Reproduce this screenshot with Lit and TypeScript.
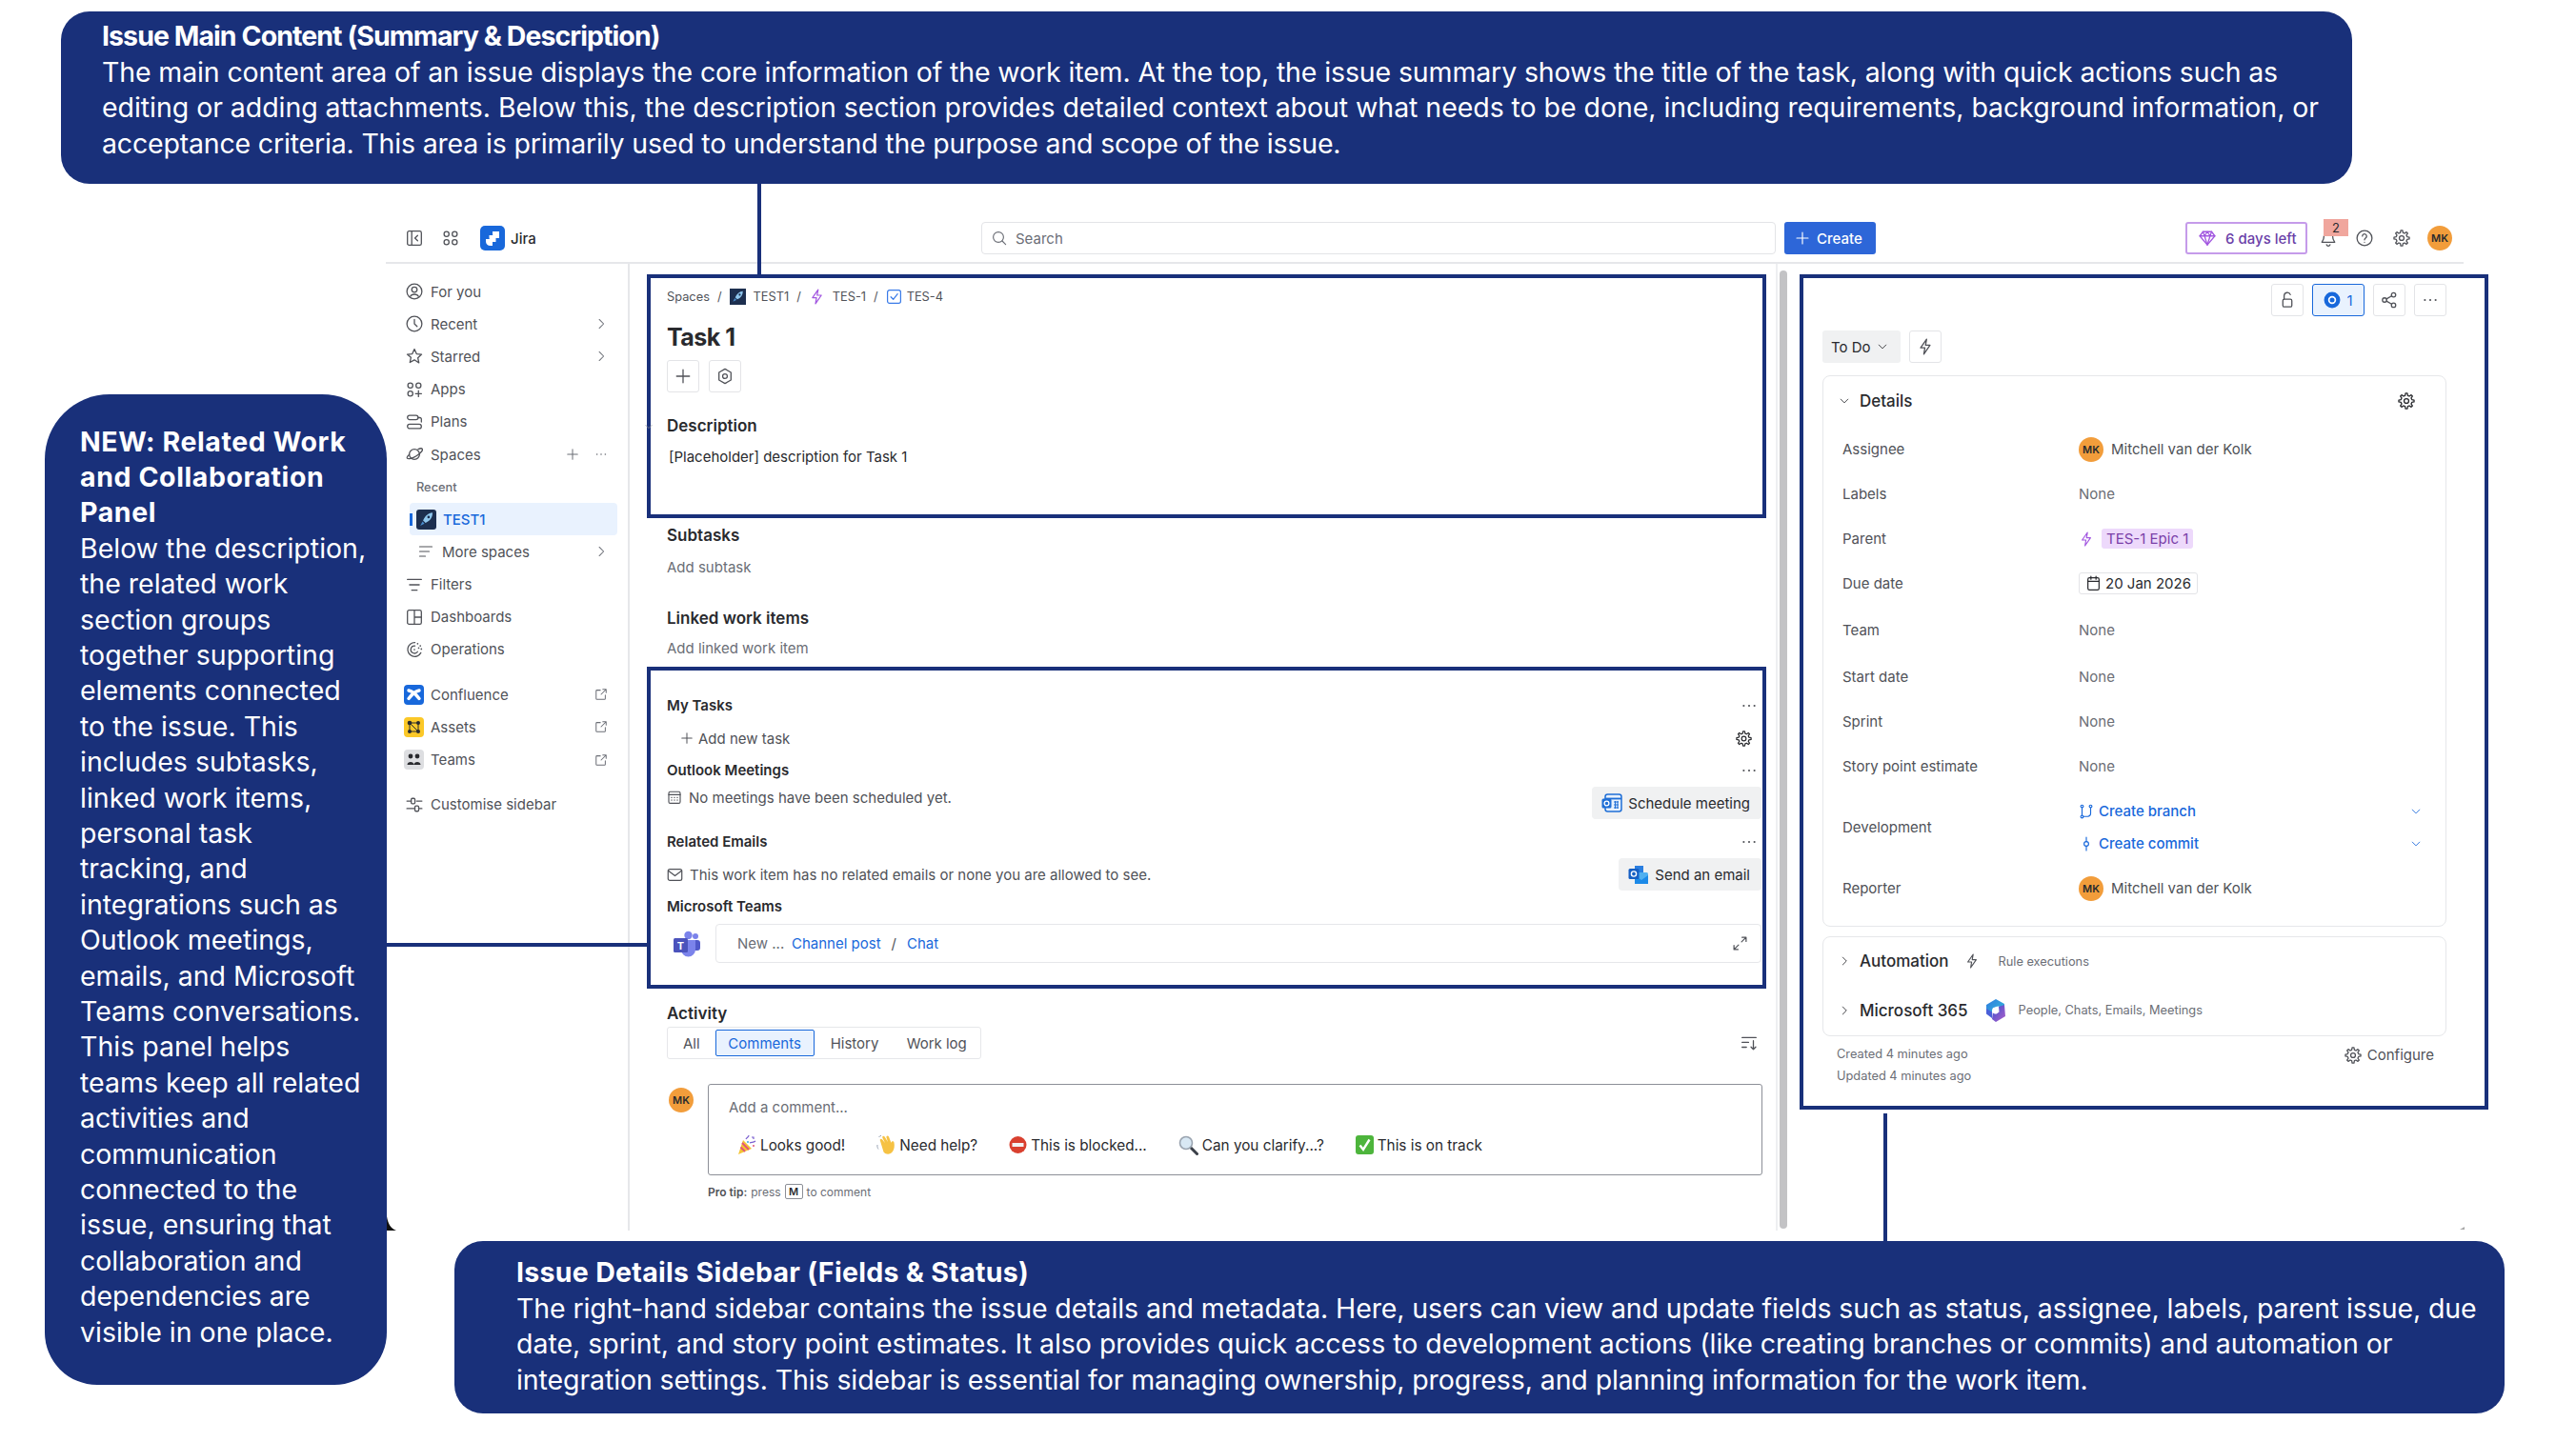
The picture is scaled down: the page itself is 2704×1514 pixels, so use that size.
import { LitElement, html, css, svg } from "lit";
import { customElement } from "lit/decorators.js";

const ic = (body: unknown, s = 18, cls = "") => html`<svg class="ic ${cls}" width=${s} height=${s} viewBox="0 0 16 16" fill="none" stroke="currentColor" stroke-width="1.15" stroke-linecap="round" stroke-linejoin="round">${body}</svg>`;

const gearD = (() => {
  const pts: string[] = [];
  const n = 8;
  for (let i = 0; i < n; i++) {
    const a = (i / n) * Math.PI * 2 - Math.PI / 2;
    const w = Math.PI / n;
    [[-0.62, 5.2], [-0.3, 7.2], [0.3, 7.2], [0.62, 5.2]].forEach(([o, r]) => {
      const t = a + o * w;
      pts.push(`${(8 + r * Math.cos(t)).toFixed(2)} ${(8 + r * Math.sin(t)).toFixed(2)}`);
    });
  }
  return `M${pts.join("L")}z`;
})();

const P = {
  panel: svg`<rect x="1.5" y="1.5" width="13" height="13" rx="1.5"/><path d="M5.5 1.5v13M11 5.5 8.5 8l2.5 2.5"/>`,
  grid: svg`<circle cx="4.2" cy="4.2" r="2.3"/><circle cx="11.8" cy="4.2" r="2.3"/><circle cx="4.2" cy="11.8" r="2.3"/><circle cx="11.8" cy="11.8" r="2.3"/>`,
  you: svg`<circle cx="8" cy="8" r="7"/><circle cx="8" cy="6.3" r="2.5"/><path d="M4.2 12.6c1.2-2.6 6.4-2.6 7.6 0"/>`,
  clock: svg`<circle cx="8" cy="8" r="7"/><path d="M8 3.8V8l2.5 2.5"/>`,
  star: svg`<path d="M8 1.4l2 4.4 4.7.5-3.5 3.2 1 4.7L8 11.4l-4.2 2.4 1-4.7L1.3 6.3 6 5.8z"/>`,
  apps: svg`<circle cx="4.2" cy="4.2" r="2.3"/><circle cx="11.8" cy="4.2" r="2.3"/><circle cx="4.2" cy="11.8" r="2.3"/><path d="M11.8 9v5.6M9 11.8h5.6"/>`,
  plans: svg`<rect x="1.5" y="1.8" width="10" height="4" rx="2"/><rect x="1.5" y="10.2" width="13" height="4" rx="2"/><path d="M11.5 4h1.5a1.6 1.6 0 0 1 1.5 2v2"/>`,
  spaces: svg`<circle cx="8" cy="8" r="4.8"/><path d="M11.5 3.2c2-.9 3.5-.9 3.9-.1.6 1.3-2 4.2-5.6 6.4s-7.6 3.3-8.5 2.1c-.5-.7.3-2 1.9-3.4"/>`,
  lines: svg`<path d="M1.5 3h13M3.5 8h9M5.5 13h5"/>`,
  lines2: svg`<path d="M1.5 3h13M1.5 8h10M1.5 13h6"/>`,
  dash: svg`<rect x="1.5" y="1.5" width="13" height="13" rx="1.5"/><path d="M8 1.5v13M8 8h6.5"/>`,
  ops: svg`<path d="M8.5 1.5a6.5 6.5 0 1 0 5.5 9.5"/><path d="M8.5 4.5a3.5 3.5 0 1 0 2.5 5.5"/><path d="M11 2.5h.01M13.5 4.5h.01M14.5 7.5h.01M12 6.5h.01M8 8h.01" stroke-width="1.5"/>`,
  ext: svg`<path d="M7 3H3a1 1 0 0 0-1 1v9a1 1 0 0 0 1 1h9a1 1 0 0 0 1-1V9"/><path d="M8 8l6-6M10 2h4v4"/>`,
  sliders: svg`<path d="M1 4.5h4M10 4.5h5M1 11.5h7M12.5 11.5H15"/><rect x="5" y="2" width="3.5" height="5" rx="1"/><rect x="8.5" y="9" width="3.5" height="5" rx="1"/>`,
  right: svg`<path d="M5.8 2.8 11 8l-5.2 5.2"/>`,
  down: svg`<path d="M3 5.5 8 10.5l5-5"/>`,
  plus: svg`<path d="M8 2v12M2 8h12"/>`,
  dots: svg`<path d="M3 8h.01M8 8h.01M13 8h.01" stroke-width="1.9"/>`,
  search: svg`<circle cx="7" cy="7" r="5.4"/><path d="M11 11l3.6 3.6"/>`,
  help: svg`<circle cx="8" cy="8" r="7"/><path d="M6 6.2a2 2 0 1 1 3.2 1.6C8.4 8.4 8 8.8 8 9.6M8 11.8h.01"/>`,
  gear: svg`<path d=${gearD}/><circle cx="8" cy="8" r="2.200"/>`,
  bell: svg`<path d="M8 1.8a4 4 0 0 0-4 4c0 3.6-1.3 5-2 6h12c-.7-1-2-2.4-2-6a4 4 0 0 0-4-4z"/><path d="M6.4 14.2a1.7 1.7 0 0 0 3.2 0"/>`,
  gem: svg`<path d="M4 2h8l3 4-7 8.4L1 6z"/><path d="M1 6h14M5.4 6 8 14.4 10.6 6M4 2l1.4 4L8 2l2.6 4L12 2"/>`,
  nut: svg`<path d="M8 1.2l5.6 3.3v7L8 14.8l-5.6-3.3v-7z"/><circle cx="8" cy="8" r="2.2"/>`,
  bolt: svg`<path d="M9.2 1 3.6 9h4l-1 6 5.8-8.4H8.2z"/>`,
  check: svg`<rect x="1.5" y="1.5" width="13" height="13" rx="2"/><path d="M4.8 8.2 7.2 10.6 11.4 5.2"/>`,
  cal: svg`<rect x="2" y="2.2" width="12" height="12.2" rx="1.5"/><path d="M2 5.4h12M4.7 8.2h.6M7.7 8.2h.6M10.7 8.2h.6M4.7 11h.6M7.7 11h.6M10.7 11h.6"/>`,
  cal2: svg`<rect x="2.5" y="2.5" width="11" height="12" rx="1.5"/><path d="M2.5 6h11M5.5 1v3M10.5 1v3"/>`,
  mail: svg`<rect x="1.2" y="2.5" width="13.6" height="11" rx="1.8"/><path d="M1.5 4 8 9l6.5-5"/>`,
  expand: svg`<path d="M9.5 6.5 14 2M10 2h4v4M6.5 9.5 2 14M2 10v4h4"/>`,
  sort: svg`<path d="M1.5 3h13M1.5 7.5h6M1.5 12h4M12 6v8M9.8 11.8l2.2 2.2 2.2-2.2"/>`,
  lock: svg`<path d="M5 7V4a3 3 0 0 1 5.8-1"/><rect x="3.8" y="7.2" width="8.4" height="7.2" rx="1.4"/>`,
  share: svg`<circle cx="12" cy="3.2" r="2"/><circle cx="3.6" cy="8" r="2"/><circle cx="12" cy="12.8" r="2"/><path d="M10.2 4.2 5.4 7M5.4 9l4.8 2.8"/>`,
  branch: svg`<circle cx="3.5" cy="2.6" r="1.4"/><circle cx="12.5" cy="2.6" r="1.4"/><circle cx="3.5" cy="13.4" r="1.4"/><path d="M3.5 4v8M12.5 4v6a3 3 0 0 1-3 3.2H5"/>`,
  commit: svg`<circle cx="8" cy="8" r="2.4"/><path d="M8 1v4.6M8 10.4V15"/>`,
};

const rocket = (s: number, cls: string) => html`<svg class=${cls} width=${s} height=${s} viewBox="0 0 16 16"><rect width="16" height="16" fill="#1d2f4f"/><path d="M13 2.5c-3.5.3-6 2.6-7.6 6.2l2 2C11 9 13 6.300 13 2.500z" fill="#8fc7ee"/><path d="M5 9.500 3.200 13l3.300-1.800z" fill="#4a8fd0"/><circle cx="9.800" cy="6" r="1" fill="#1d2f4f"/></svg>`;

const logoJira = html`<svg width="26" height="26" viewBox="0 0 26 26"><rect width="26" height="26" rx="5" fill="#1868db"/><path d="M13 6h7v7h-2.500a4.500 4.500 0 0 1-4.500-4.500zM9.500 10h7v7H14a4.500 4.500 0 0 1-4.500-4.500zM6 14h7v7h-2.500A4.500 4.500 0 0 1 6 16.500z" fill="#fff"/></svg>`;
const logoConf = html`<svg width="21" height="21" viewBox="0 0 21 21"><rect width="21" height="21" rx="4" fill="#1868db"/><path d="M5 6c3 .5 8 4.500 11 8.500M16 6c-3 .5-8 4.500-11 8.500" stroke="#fff" stroke-width="3.400" fill="none" stroke-linecap="round"/></svg>`;
const logoAssets = html`<svg width="21" height="21" viewBox="0 0 21 21"><rect width="21" height="21" rx="4" fill="#fbc828"/><g fill="#292a2e"><circle cx="6" cy="6" r="2.300"/><circle cx="15" cy="6" r="2"/><circle cx="6" cy="15" r="2"/><circle cx="15" cy="15" r="2"/></g><path d="M6 6h9v9H6zM6 6l9 9" stroke="#292a2e" fill="none"/></svg>`;
const logoTeams = html`<svg width="21" height="21" viewBox="0 0 21 21"><rect width="21" height="21" rx="4" fill="#dddee1"/><g fill="#292a2e"><circle cx="7" cy="7" r="2.400"/><circle cx="14" cy="7" r="2.400"/><path d="M3.500 16c0-4 7-4 7 0zM10.500 16c0-4 7-4 7 0z"/></g></svg>`;
const msTeams = html`<svg width="30" height="28" viewBox="0 0 30 28"><circle cx="24" cy="6" r="3" fill="#7b83eb"/><circle cx="16.500" cy="5" r="4.200" fill="#7b83eb"/><rect x="19" y="10" width="10" height="11" rx="3" fill="#5059c9"/><path d="M9 10h15v10a7.500 7.500 0 0 1-15 0z" fill="#7b83eb"/><rect x="1" y="8" width="15" height="15" rx="1.500" fill="#4b53bc"/><text x="8.500" y="20" text-anchor="middle" font-family="Inter" font-size="11" font-weight="700" fill="#fff">T</text></svg>`;
const outCal = html`<svg width="22" height="22" viewBox="0 0 22 22"><rect x="4" y="2" width="17" height="18" rx="2.500" fill="#e8f1fc" stroke="#1f6fd6" stroke-width="1.500"/><path d="M4 6.500h17" stroke="#1f6fd6" stroke-width="1.800"/><path d="M13 10h5M13 13h5M13 16h5M14.500 9v8M17 9v8" stroke="#1f6fd6"/><rect x="0.500" y="6.500" width="10" height="10" rx="1.500" fill="#1f6fd6"/><circle cx="5.500" cy="11.500" r="2.400" fill="none" stroke="#fff" stroke-width="1.300"/></svg>`;
const outMail = html`<svg width="22" height="22" viewBox="0 0 22 22"><rect x="7" y="2" width="9" height="8" fill="#2a7ee0"/><rect x="7" y="9" width="14" height="12" rx="1.500" fill="#50b0f0"/><path d="M7 12l7 5 7-5v9H7z" fill="#1c8ae8"/><rect x="0.500" y="5" width="11" height="11" rx="1.500" fill="#1660c4"/><circle cx="6" cy="10.500" r="2.600" fill="none" stroke="#fff" stroke-width="1.400"/></svg>`;
const m365 = html`<svg width="23" height="26" viewBox="0 0 23 26"><defs><linearGradient id="ma" x1="0" y1="0" x2="1" y2="1"><stop offset="0" stop-color="#2f7ae0"/><stop offset="1" stop-color="#35c0d8"/></linearGradient><linearGradient id="mb" x1="0" y1="0" x2="1" y2="1"><stop offset="0" stop-color="#3a4fd0"/><stop offset="1" stop-color="#b060c8"/></linearGradient></defs><path d="M12 1 21 6v6l-6-3.500-3 .5-4 4v6l-6-4V7z" fill="url(#ma)"/><path d="M21 7l1 12-10 6-4-3 1-8 3 2.500 3.500-2L15 9z" fill="url(#mb)"/><path d="M8 21 2 16.500V11l6 3.500z" fill="#4a5fd8"/><circle cx="11.500" cy="13" r="3.400" fill="#fff"/></svg>`;
const party = html`<svg width="20" height="22" viewBox="0 0 20 22"><path d="M1 21 6 6l9 9z" fill="#f4c534"/><path d="M3.500 13.500 8 18M5 9l7 7" stroke="#e2557a" stroke-width="1.800"/><path d="M9 5c1-2 3-2 3-4M13 9c2-1 4 0 6-2M15 3h2v2" stroke="#7a5fd0" stroke-width="1.200" fill="none"/><circle cx="11" cy="8" r="1" fill="#3fa9e0"/><circle cx="17" cy="12" r="1" fill="#e2557a"/></svg>`;
const wave = html`<svg width="20" height="22" viewBox="0 0 20 22"><path d="M4 7c-1-2 1-3 2.200-1.500L9 9 6.500 4c-1-2 1.200-3 2.300-1.300L12 8l-1.500-4.500c-.6-1.900 1.700-2.700 2.500-1L15.500 9c0-2 2.500-2.500 3-.5.700 3.500.3 7-1.500 9.500-2.500 3.500-7 3.500-9.500.5z" fill="#f6c244"/><path d="M1 11c-.3 1.500 0 3 1 4.500M2.500 3C3.200 2 4 1.500 5 1.300" stroke="#9aa4b5" fill="none"/></svg>`;
const blocked = html`<svg width="19" height="20" viewBox="0 0 19 20"><circle cx="9.500" cy="10" r="9" fill="#d9402f"/><rect x="3.500" y="8" width="12" height="4" fill="#f2f2f2"/></svg>`;
const lens = html`<svg width="21" height="21" viewBox="0 0 21 21"><path d="M12 12l7.500 7.500" stroke="#3a3f48" stroke-width="3" stroke-linecap="round"/><circle cx="8" cy="8" r="6.500" fill="#d8e8f4" stroke="#9aa4b0" stroke-width="1.600"/></svg>`;
const tick = html`<svg width="19" height="20" viewBox="0 0 19 20"><rect width="19" height="20" rx="3" fill="#4db53c"/><path d="M4.500 10.500 8 15 14.500 4.500" stroke="#fff" stroke-width="2.400" fill="none"/></svg>`;

const NAV: [string, unknown, boolean?][] = [
  ["For you", P.you],
  ["Recent", P.clock, true],
  ["Starred", P.star, true],
  ["Apps", P.apps],
  ["Plans", P.plans],
];
const APPS: [string, unknown][] = [["Confluence", logoConf], ["Assets", logoAssets], ["Teams", logoTeams]];

const TOP = [
  "The main content area of an issue displays the core information of the work item. At the top, the issue summary shows the title of the task, along with quick actions such as",
  "editing or adding attachments. Below this, the description section provides detailed context about what needs to be done, including requirements, background information, or",
  "acceptance criteria. This area is primarily used to understand the purpose and scope of the issue.",
];
const LEFT_T = ["NEW: Related Work", "and Collaboration", "Panel"];
const LEFT = ["Below the description,", "the related work", "section groups", "together supporting", "elements connected", "to the issue. This", "includes subtasks,", "linked work items,", "personal task", "tracking, and", "integrations such as", "Outlook meetings,", "emails, and Microsoft", "Teams conversations.", "This panel helps", "teams keep all related", "activities and", "communication", "connected to the", "issue, ensuring that", "collaboration and", "dependencies are", "visible in one place."];
const BOT = [
  "The right-hand sidebar contains the issue details and metadata. Here, users can view and update fields such as status, assignee, labels, parent issue, due",
  "date, sprint, and story point estimates. It also provides quick access to development actions (like creating branches or commits) and automation or",
  "integration settings. This sidebar is essential for managing ownership, progress, and planning information for the work item.",
];

@customElement("app-root")
export class AppRoot extends LitElement {
  static styles = css`
    :host { display: block; position: relative; width: 2704px; height: 1514px; overflow: hidden; background: #fff; font-family: Inter, "Liberation Sans", sans-serif; color: #292a2e; font-size: 14px; }
    * { box-sizing: border-box; }
    .ic { flex: none; display: block; }
    .app { position: absolute; left: 405px; top: 225px; width: 2181px; height: 1067px; display: flex; flex-direction: column; }
    .nav { height: 52px; flex: none; border-bottom: 2px solid #e6e7ea; display: flex; align-items: center; padding: 0 12px 0 21px; color: #505258; }
    .navl { width: 604px; display: flex; align-items: center; gap: 20px; }
    .jira { display: flex; align-items: center; gap: 6px; margin-left: 2px; font-size: 15px; font-weight: 500; color: #292a2e; }
    .search { width: 834px; height: 34px; border: 1.500px solid #e3e4e7; border-radius: 4px; display: flex; align-items: center; gap: 9px; padding-left: 10px; color: #6b6e76; font-size: 15px; }
    .create { margin-left: 9px; width: 96px; height: 34px; background: #2d66d8; color: #fff; border-radius: 3px; display: flex; align-items: center; gap: 7px; padding-left: 11px; font-weight: 500; font-size: 15px; }
    .sp { flex: 1; }
    .trial { width: 128px; height: 34px; border: 2px solid #c59bea; border-radius: 3px; display: flex; align-items: center; gap: 10px; padding-left: 12px; color: #6b3fa8; font-size: 15px; font-weight: 500; white-space: nowrap; }
    .trial .ic { color: #a257e0; }
    .bell { position: relative; margin-left: 13px; color: #505258; }
    .badge { position: absolute; left: 4px; top: -11px; width: 26px; height: 18px; background: #f0a69d; display: flex; align-items: center; justify-content: center; font-size: 13px; color: #292a2e; }
    .help { margin-left: 20px; }
    .cog { margin-left: 21px; }
    .av { width: 26px; height: 26px; border-radius: 50%; background: #f29d3b; color: #292a2e; font-size: 11px; font-weight: 600; display: flex; align-items: center; justify-content: center; flex: none; }
    .cog + .av { margin-left: 18px; }
    .body { flex: 1; display: flex; min-height: 0; }
    .side { width: 256px; flex: none; border-right: 2px solid #e6e7ea; padding-top: 12px; color: #505258; font-size: 15px; }
    .si { height: 34.200px; display: flex; align-items: center; gap: 8px; padding: 0 21px; }
    .si .lbl { flex: 1; white-space: nowrap; }
    .si .tr { color: #6b6e76; }
    .si .logo { margin-left: -2px; margin-right: -1px; flex: none; display: flex; }
    .si.sub { padding-left: 32px; font-size: 12.800px; font-weight: 500; color: #6b6e76; }
    .si.act { margin: 0 11px 0 25px; padding: 0 0 0 7px; height: 34px; background: #e9f2fe; border-radius: 4px; color: #1868db; position: relative; gap: 7px; font-weight: 500; }
    .si.act::before { content: ""; position: absolute; left: 0; top: 11px; width: 2.500px; height: 13px; background: #1868db; }
    .roc { border-radius: 3px; flex: none; }
    .si.more { padding-left: 34px; gap: 9px; }
    .gap1 { margin-top: 13px; }
    .gap2 { margin-top: 13px; }
    .main { width: 1203px; flex: none; padding: 24px 15px 0 39px; }
    .crumb { height: 20px; display: flex; align-items: center; gap: 8px; font-size: 12.800px; color: #505258; white-space: nowrap; }
    .crumb .bolt { color: #a257e0; }
    .crumb .chk { color: #3a7be8; }
    .crumb .last { margin-left: -3px; }
    h1 { margin: 17px 0 0; height: 32px; line-height: 32px; font-size: 25px; font-weight: 700; letter-spacing: -0.500px; }
    .tools { margin-top: 8px; display: flex; gap: 10px; }
    .btn { width: 34px; height: 34px; border: 1.500px solid #e3e4e7; border-radius: 3px; display: flex; align-items: center; justify-content: center; color: #505258; }
    .h16 { height: 24px; line-height: 24px; font-size: 17px; font-weight: 600; }
    .h14 { height: 20px; line-height: 20px; font-size: 15px; font-weight: 600; }
    .t { height: 20px; line-height: 20px; font-size: 15px; color: #505258; white-space: nowrap; }
    .sub { color: #6b6e76; }
    .m23 { margin-top: 23px; } .m11 { margin-top: 11px; } .m60 { margin-top: 60px; } .m12 { margin-top: 12px; } .m31 { margin-top: 31px; } .m10 { margin-top: 10px; } .m40 { margin-top: 40px; } .m14 { margin-top: 14px; } .m7 { margin-top: 7px; } .m8 { margin-top: 8px; } .m41 { margin-top: 41px; } .m2 { margin-top: 2px; } .m26 { margin-top: 26px; } .m13 { margin-top: 13px; } .m15 { margin-top: 15px; }
    .desc { padding-left: 2px; color: #292a2e; }
    .between { display: flex; justify-content: space-between; align-items: center; }
    .between > .ic:last-child { color: #505258; margin-right: 4px; }
    .addt { display: flex; align-items: center; gap: 5px; padding-left: 14px; color: #505258; font-size: 15px; height: 20px; }
    .addt .lbl { flex: 1; }
    .addt .gearb { color: #292a2e; margin-right: 10px; stroke-width: 2.200; }
    .row { display: flex; justify-content: space-between; height: 34px; }
    .rowc { align-items: center; }
    .msg { display: flex; align-items: center; gap: 7px; height: 22px; font-size: 15px; color: #505258; white-space: nowrap; }
    .pill { height: 34px; background: #f0f1f2; border-radius: 4px; display: flex; align-items: center; gap: 6px; padding: 0 12px 0 10px; font-size: 15px; color: #292a2e; white-space: nowrap; }
    .teams { display: flex; align-items: center; gap: 15px; padding-left: 6px; }
    .tbox { flex: 1; height: 41px; border: 1.500px solid #e6e7ea; border-radius: 4px; display: flex; align-items: center; padding: 0 13px 0 22px; color: #6b6e76; font-size: 15px; white-space: nowrap; }
    .tbox a { color: #1868db; }
    .tbox .new { width: 57px; }
    .tbox .slash { margin: 0 11px 0 11px; color: #505258; }
    .tbox .sp2 { flex: 1; }
    .tbox .ic { color: #505258; }
    .tabs { height: 34px; width: 330px; border: 1.500px solid #e6e7ea; border-radius: 3px; display: flex; align-items: center; padding-left: 16px; font-size: 15px; color: #505258; flex: none; }
    .tab-c { margin-left: 16px; width: 104px; height: 28px; background: #e9f2fe; border: 1.500px solid #1868db; border-radius: 2px; color: #1868db; display: flex; align-items: center; justify-content: center; }
    .tabs .h { margin-left: 17px; width: 80px; }
    .cm { display: flex; gap: 15px; padding-left: 2px; }
    .cm .av { margin-top: 4px; }
    .cbox { flex: 1; height: 96px; margin-right: -1px; border: 1.500px solid #8c8f97; border-radius: 3px; padding: 14px 0 0 21px; }
    .ph { height: 20px; line-height: 20px; font-size: 15px; color: #6b6e76; }
    .quick { margin-top: 18px; display: flex; padding-left: 9px; height: 22px; font-size: 15.300px; color: #292a2e; white-space: nowrap; }
    .q { display: flex; align-items: center; gap: 4px; margin-right: 33px; }
    .tip { margin: 9px 0 0 43px; height: 16px; display: flex; align-items: center; gap: 4px; font-size: 12px; color: #6b6e76; white-space: nowrap; }
    .tip b { color: #505258; font-weight: 600; }
    .kbd { width: 19px; height: 16px; border: 1px solid #8c8f97; border-radius: 2px; display: flex; align-items: center; justify-content: center; font-size: 11px; font-weight: 600; color: #292a2e; }
    .track { width: 16px; flex: none; border-left: 2px solid #eeeff1; padding: 7px 4px 2px 2px; }
    .thumb { height: 100%; background: #c3c3c5; border-radius: 4px; }
    .rp { flex: 1; min-width: 0; padding: 21px 18px 0 33px; }
    .acts { display: flex; justify-content: flex-end; gap: 9px; }
    .eye { width: 55px; height: 34px; background: #e9f2fe; border: 1.500px solid #1868db; border-radius: 3px; display: flex; align-items: center; justify-content: center; gap: 6px; color: #1868db; font-size: 15px; }
    .status { display: flex; gap: 9px; }
    .todo { width: 82px; height: 34px; background: #f0f1f2; border-radius: 3px; display: flex; align-items: center; gap: 6px; padding-left: 9px; font-size: 15px; color: #292a2e; white-space: nowrap; }
    .card { border: 1.500px solid #e6e7ea; border-radius: 8px; }
    .card.det { padding-bottom: 15.500px; }
    .dhead { display: flex; align-items: center; height: 30px; margin: 11px 0 12px; padding: 0 32px 0 16px; font-size: 17px; font-weight: 500; gap: 10px; }
    .dhead .lbl { flex: 1; }
    .fld { display: flex; align-items: center; height: 47px; padding-left: 20px; font-size: 15px; color: #505258; white-space: nowrap; }
    .fld.tall { height: 51px; }
    .fld.dev { height: 81px; }
    .fld .k { width: 248px; flex: none; }
    .fld .v { display: flex; align-items: center; gap: 8px; color: #6b6e76; }
    .name { color: #505258; }
    .v .bolt { color: #a257e0; }
    .chip { height: 21px; padding: 0 5px; background: #edd9fb; border-radius: 3px; color: #7a3fa8; display: flex; align-items: center; }
    .date { height: 23px; border: 1.500px solid #e3e4e7; border-radius: 3px; display: flex; align-items: center; gap: 4px; padding: 0 6px; color: #292a2e; }
    .devs { flex: 1; padding-right: 25px; display: flex; flex-direction: column; gap: 14px; color: #1868db; }
    .devr { height: 20px; display: flex; align-items: center; gap: 5px; font-weight: 500; }
    .devr .lbl { flex: 1; }
    .card2 { margin-top: 10px; }
    .sec { height: 51.500px; display: flex; align-items: center; padding-left: 16px; font-size: 17px; font-weight: 500; white-space: nowrap; }
    .sec .lbl { margin: 0 17px 0 10px; }
    .sec small { font-size: 12.800px; font-weight: 400; color: #6b6e76; margin-left: 13px; }
    .sec .bsec { margin-right: 6px; color: #505258; }
    .foot { display: flex; justify-content: space-between; padding: 7px 13px 0 15px; font-size: 12.800px; color: #6b6e76; }
    .foot div div { height: 23px; line-height: 23px; }
    .conf { display: flex; align-items: center; gap: 6px; font-size: 15px; color: #505258; height: 26px; }
    /* annotation overlay */
    .co { position: absolute; background: #19307a; color: #fff; font-family: Inter, sans-serif; font-size: 28.500px; line-height: 37.500px; white-space: nowrap; }
    .co b { font-weight: 700; display: block; }
    .co-top { left: 64px; top: 12px; width: 2405px; height: 181px; border-radius: 30px; padding: 7px 0 0 43px; letter-spacing: -0.130px; }
    .co-top b { letter-spacing: -0.930px; }
    .co-top div:nth-of-type(2) { letter-spacing: -0.050px; }
    .co-top div:nth-of-type(3) { letter-spacing: -0.180px; }
    .co-left { left: 47px; top: 414px; width: 359px; height: 1040px; border-radius: 68px 68px 55px 55px; padding: 30.500px 0 0 37px; line-height: 37.400px; }
    .co-left b { letter-spacing: 0.600px; }
    .co-bot { left: 477px; top: 1303px; width: 2152px; height: 181px; border-radius: 30px; padding: 14px 0 0 65px; letter-spacing: -0.100px; }
    .co-bot b { letter-spacing: 0.300px; }
    .co-bot div:nth-of-type(2) { letter-spacing: -0.020px; }
    .bx { position: absolute; border: 4px solid #19307a; }
    .b1 { left: 679px; top: 288px; width: 1175px; height: 256px; }
    .b2 { left: 679px; top: 700px; width: 1175px; height: 338px; }
    .b3 { left: 1889px; top: 288px; width: 723px; height: 877px; }
    .ln { position: absolute; background: #19307a; }
    .l1 { left: 795px; top: 193px; width: 4px; height: 95px; }
    .l2 { left: 406px; top: 990px; width: 273px; height: 4px; }
    .l3 { left: 1977px; top: 1169px; width: 4px; height: 134px; }
    .chev { position: absolute; left: 676px; top: 443px; color: #8c8f97; }
    .corner { position: absolute; left: 406px; top: 1277px; }
    .corner2 { position: absolute; left: 2582px; top: 1288px; }
  `;

  render() {
    const none = (k: string, cls = "") => html`<div class="fld ${cls}"><div class="k">${k}</div><div class="v">None</div></div>`;
    const who = (k: string) => html`<div class="fld"><div class="k">${k}</div><div class="v"><div class="av">MK</div><span class="name">Mitchell van der Kolk</span></div></div>`;
    return html`
      <div class="app">
        <div class="nav">
          <div class="navl">${ic(P.panel)}${ic(P.grid)}<div class="jira">${logoJira}Jira</div></div>
          <div class="search">${ic(P.search, 16)}Search</div>
          <div class="create">${ic(P.plus, 16)}Create</div>
          <div class="sp"></div>
          <div class="trial">${ic(P.gem, 18)}6 days left</div>
          <div class="bell">${ic(P.bell)}<div class="badge">2</div></div>
          <div class="help">${ic(P.help)}</div>
          <div class="cog">${ic(P.gear)}</div>
          <div class="av">MK</div>
        </div>
        <div class="body">
          <div class="side">
            ${NAV.map(([t, p, c]) => html`<div class="si">${ic(p)}<span class="lbl">${t}</span>${c ? ic(P.right, 14, "tr") : ""}</div>`)}
            <div class="si">${ic(P.spaces)}<span class="lbl">Spaces</span>${ic(P.plus, 14, "tr")}<span></span>${ic(P.dots, 14, "tr")}</div>
            <div class="si sub">Recent</div>
            <div class="si act">${rocket(21, "roc")}<span class="lbl">TEST1</span></div>
            <div class="si more">${ic(P.lines2, 16)}<span class="lbl">More spaces</span>${ic(P.right, 14, "tr")}</div>
            <div class="si">${ic(P.lines)}<span class="lbl">Filters</span></div>
            <div class="si">${ic(P.dash)}<span class="lbl">Dashboards</span></div>
            <div class="si">${ic(P.ops)}<span class="lbl">Operations</span></div>
            <div class="gap1">
              ${APPS.map(([t, l]) => html`<div class="si"><span class="logo">${l}</span><span class="lbl">${t}</span>${ic(P.ext, 14, "tr")}</div>`)}
            </div>
            <div class="si gap2">${ic(P.sliders)}<span class="lbl">Customise sidebar</span></div>
          </div>
          <div class="main">
            <div class="crumb"><span>Spaces</span><span>/</span>${rocket(17, "")}<span>TEST1</span><span>/</span>${ic(P.bolt, 17, "bolt")}<span>TES-1</span><span>/</span>${ic(P.check, 17, "chk")}<span class="last">TES-4</span></div>
            <h1>Task 1</h1>
            <div class="tools"><div class="btn">${ic(P.plus)}</div><div class="btn">${ic(P.nut)}</div></div>
            <div class="h16 m23">Description</div>
            <div class="t desc m11">[Placeholder] description for Task 1</div>
            <div class="h16 m60">Subtasks</div>
            <div class="t sub m12">Add subtask</div>
            <div class="h16 m31">Linked work items</div>
            <div class="t sub m10">Add linked work item</div>
            <div class="h14 m40 between"><span>My Tasks</span>${ic(P.dots, 18)}</div>
            <div class="addt m14">${ic(P.plus, 14)}<span class="lbl">Add new task</span><span class="gearb">${ic(P.gear, 17)}</span></div>
            <div class="h14 m14 between"><span>Outlook Meetings</span>${ic(P.dots, 18)}</div>
            <div class="row m7"><div class="msg">${ic(P.cal, 16)}No meetings have been scheduled yet.</div><div class="pill">${outCal}Schedule meeting</div></div>
            <div class="h14 m14 between"><span>Related Emails</span>${ic(P.dots, 18)}</div>
            <div class="row rowc m7"><div class="msg">${ic(P.mail, 17)}This work item has no related emails or none you are allowed to see.</div><div class="pill">${outMail}Send an email</div></div>
            <div class="h14 m7">Microsoft Teams</div>
            <div class="teams m8">${msTeams}<div class="tbox"><span class="new">New ...</span><a>Channel post</a><span class="slash">/</span><a>Chat</a><span class="sp2"></span>${ic(P.expand, 17)}</div></div>
            <div class="h16 m41">Activity</div>
            <div class="between m2"><div class="tabs"><span>All</span><div class="tab-c">Comments</div><span class="h">History</span><span>Work log</span></div>${ic(P.sort, 18)}</div>
            <div class="cm m26"><div class="av">MK</div><div class="cbox"><div class="ph">Add a comment...</div><div class="quick">
              <div class="q">${party}Looks good!</div><div class="q">${wave}Need help?</div><div class="q">${blocked}This is blocked...</div><div class="q">${lens}Can you clarify...?</div><div class="q">${tick}This is on track</div>
            </div></div></div>
            <div class="tip"><b>Pro tip:</b> press <span class="kbd">M</span> to comment</div>
          </div>
          <div class="track"><div class="thumb"></div></div>
          <div class="rp">
            <div class="acts"><div class="btn">${ic(P.lock)}</div><div class="eye"><svg width="18" height="18" viewBox="0 0 16 16"><circle cx="8" cy="8" r="7.500" fill="#1868db"/><circle cx="8" cy="8" r="3" fill="none" stroke="#fff" stroke-width="1.500"/></svg>1</div><div class="btn">${ic(P.share)}</div><div class="btn">${ic(P.dots)}</div></div>
            <div class="status m15"><div class="todo">To Do${ic(P.down, 12)}</div><div class="btn">${ic(P.bolt)}</div></div>
            <div class="card det m13">
              <div class="dhead">${ic(P.down, 12)}<span class="lbl">Details</span>${ic(P.gear)}</div>
              ${who("Assignee")}
              ${none("Labels")}
              <div class="fld"><div class="k">Parent</div><div class="v">${ic(P.bolt, 16, "bolt")}<div class="chip">TES-1 Epic 1</div></div></div>
              <div class="fld"><div class="k">Due date</div><div class="v"><div class="date">${ic(P.cal2, 17)}20 Jan 2026</div></div></div>
              ${none("Team", "tall")}
              ${none("Start date")}
              ${none("Sprint")}
              ${none("Story point estimate")}
              <div class="fld dev"><div class="k">Development</div><div class="devs">
                <div class="devr">${ic(P.branch, 16)}<span class="lbl">Create branch</span>${ic(P.down, 12)}</div>
                <div class="devr">${ic(P.commit, 16)}<span class="lbl">Create commit</span>${ic(P.down, 12)}</div>
              </div></div>
              ${who("Reporter")}
            </div>
            <div class="card card2">
              <div class="sec">${ic(P.right, 12)}<span class="lbl">Automation</span>${ic(P.bolt, 16, "bsec")}<small>Rule executions</small></div>
              <div class="sec">${ic(P.right, 12)}<span class="lbl">Microsoft 365</span>${m365}<small>People, Chats, Emails, Meetings</small></div>
            </div>
            <div class="foot"><div><div>Created 4 minutes ago</div><div>Updated 4 minutes ago</div></div><div class="conf">${ic(P.gear, 18)}Configure</div></div>
          </div>
        </div>
      </div>

      <div class="ln l1"></div><div class="ln l2"></div><div class="ln l3"></div>
      <div class="bx b1"></div><div class="bx b2"></div><div class="bx b3"></div>
      <span class="chev">${ic(P.down, 10)}</span>
      <svg class="corner" width="10" height="15" viewBox="0 0 10 15"><path d="M0 0C1 7 4 13 10 15H0z" fill="#111"/></svg>
      <svg class="corner2" width="5" height="3" viewBox="0 0 5 3"><path d="M5 0v3H0z" fill="#aaa"/></svg>

      <div class="co co-top"><b>Issue Main Content (Summary &amp; Description)</b>${TOP.map((l) => html`<div>${l}</div>`)}</div>
      <div class="co co-left">${LEFT_T.map((l) => html`<b>${l}</b>`)}${LEFT.map((l) => html`<div>${l}</div>`)}</div>
      <div class="co co-bot"><b>Issue Details Sidebar (Fields &amp; Status)</b>${BOT.map((l) => html`<div>${l}</div>`)}</div>
    `;
  }
}
